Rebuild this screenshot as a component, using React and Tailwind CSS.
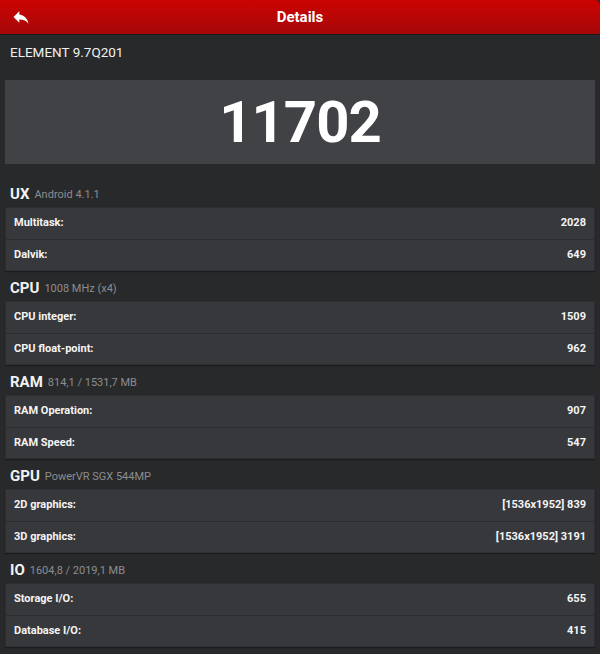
const sections = [
  {
    name: "UX",
    info: "Android 4.1.1",
    rows: [
      ["Multitask:", "2028"],
      ["Dalvik:", "649"],
    ],
  },
  {
    name: "CPU",
    info: "1008 MHz (x4)",
    rows: [
      ["CPU integer:", "1509"],
      ["CPU float-point:", "962"],
    ],
  },
  {
    name: "RAM",
    info: "814,1 / 1531,7 MB",
    rows: [
      ["RAM Operation:", "907"],
      ["RAM Speed:", "547"],
    ],
  },
  {
    name: "GPU",
    info: "PowerVR SGX 544MP",
    rows: [
      ["2D graphics:", "[1536x1952] 839"],
      ["3D graphics:", "[1536x1952] 3191"],
    ],
  },
  {
    name: "IO",
    info: "1604,8 / 2019,1 MB",
    rows: [
      ["Storage I/O:", "655"],
      ["Database I/O:", "415"],
    ],
  },
];

function BackIcon() {
  return (
    <svg width="20" height="20" viewBox="0 0 24 24" fill="white">
      <path d="M10 9V5l-7 7 7 7v-4.1c5 0 8.5 1.6 11 5.1-1-5-4-10-11-11z" />
    </svg>
  );
}

export default function App() {
  return (
    <div
      className="h-[654px] w-[600px] overflow-hidden bg-[#28292b] text-white"
      style={{ fontFamily: "Roboto, 'Liberation Sans', sans-serif" }}
    >
      <div className="relative flex h-[35px] items-center justify-center rounded-tr-[5px] border-b border-[#1a1a1a] bg-gradient-to-b from-[#cc0202] to-[#a50808]">
        <div className="absolute left-[11px] top-[7px]">
          <BackIcon />
        </div>
        <h1 className="text-[15px] font-bold">Details</h1>
      </div>

      <div className="h-[45px] px-[10px] pt-[9px] text-[13.5px] leading-[16px] text-[#f0f0f0]">
        ELEMENT 9.7Q201
      </div>

      <div className="mx-[5px] flex h-[84px] items-center justify-center bg-[#414246]">
        <span className="text-[58px] font-bold leading-none tracking-[-1px]">11702</span>
      </div>

      <div className="mt-[13px]">
        {sections.map((section) => (
          <div key={section.name}>
            <div className="flex h-[30px] items-center gap-[5px] px-[10px] pt-[5px]">
              <span className="text-[15px] font-bold text-[#f2f2f2]">{section.name}</span>
              <span className="pt-[2px] text-[11px] text-[#8c8d90]">{section.info}</span>
            </div>
            <div className="mx-[5px] border border-[#2e2f32] bg-[#37383c] shadow-[0_1px_1px_rgba(0,0,0,0.3)]">
              {section.rows.map(([label, value], i) => (
                <div
                  key={label}
                  className={`flex h-[31px] items-center justify-between pl-[8px] pr-[8px] text-[11px] font-bold text-[#f4f4f4] ${
                    i > 0 ? "border-t border-[#2b2c2f]" : ""
                  }`}
                >
                  <span>{label}</span>
                  <span>{value}</span>
                </div>
              ))}
            </div>
          </div>
        ))}
      </div>
    </div>
  );
}
